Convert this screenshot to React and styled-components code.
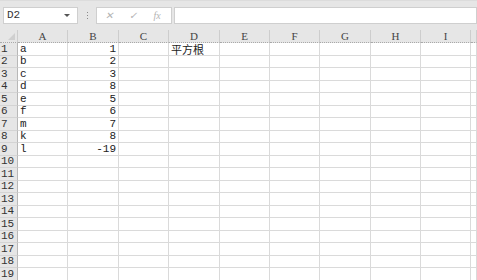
import React from "react";
import styled, { createGlobalStyle } from "styled-components";

const GlobalStyle = createGlobalStyle`
  html, body {
    margin: 0;
    padding: 0;
    background: #ffffff;
    overflow: hidden;
  }
`;

const Page = styled.div`
  width: 477px;
  height: 280px;
  overflow: hidden;
  font-family: "Liberation Mono", "Noto Sans CJK SC", monospace;
  font-size: 11px;
  color: #222;
`;

const Toolbar = styled.div`
  display: flex;
  align-items: center;
  height: 30px;
  box-sizing: border-box;
  padding: 6px 0 7px 3px;
  background: #e6e6e6;
  border-top: 1px solid #dcdcdc;
`;

const Box = styled.div`
  display: flex;
  align-items: center;
  height: 17px;
  box-sizing: border-box;
  background: #fff;
  border: 1px solid #cfcfcf;
  width: ${(p) => p.$w || "auto"};
  flex: ${(p) => (p.$grow ? 1 : "none")};
  margin-left: ${(p) => p.$ml || "0"};
`;

const NameText = styled.span`
  padding-left: 3px;
  flex: 1;
  font-size: 11px;
  color: #333;
`;

const Caret = styled.span`
  width: 0;
  height: 0;
  margin-right: 7px;
  border-left: 3px solid transparent;
  border-right: 3px solid transparent;
  border-top: 3px solid #555;
`;

const Dots = styled.div`
  width: 18px;
  display: flex;
  flex-direction: column;
  align-items: center;
  gap: 2px;
  span {
    width: 1px;
    height: 1px;
    background: #8a8a8a;
  }
`;

const Icon = styled.span`
  width: 24px;
  display: flex;
  justify-content: center;
  align-items: center;
  color: #b3b3b3;
  font-size: 10px;
  font-style: italic;
  font-family: "Liberation Serif", serif;
`;

const Grid = styled.div`
  display: grid;
  grid-template-columns: 18px 50px 51px 50px 51px 50px 50px 51px 50px 50px 6px;
  grid-template-rows: 13px;
  grid-auto-rows: 12.5px;
`;

const Head = styled.div`
  background: #e6e6e6;
  border-right: 1px solid #cdcdcd;
  border-bottom: 1px dotted #a9a9a9;
  display: flex;
  align-items: center;
  justify-content: center;
  color: #444;
  font-size: 11px;
  box-sizing: border-box;
  font-family: "Liberation Serif", serif;
`;

const Corner = styled(Head)`
  position: relative;
  &::after {
    content: "";
    position: absolute;
    right: 2px;
    bottom: 2px;
    border-left: 7px solid transparent;
    border-bottom: 7px solid #cfcfcf;
  }
`;

const RowNum = styled.div`
  background: #e6e6e6;
  border-right: 1px solid #b8b8b8;
  border-bottom: 1px solid #d4d4d4;
  box-sizing: border-box;
  display: flex;
  align-items: center;
  padding-left: 1px;
  color: #333;
  font-size: 11px;
`;

const Cell = styled.div`
  border-right: 1px solid #dadada;
  border-bottom: 1px solid #dadada;
  box-sizing: border-box;
  display: flex;
  align-items: center;
  justify-content: ${(p) => (p.$num ? "flex-end" : "flex-start")};
  padding: 0 2px 0 2px;
  white-space: nowrap;
  overflow: visible;
  font-size: 11px;
  color: #222;
  font-family: ${(p) =>
    p.$cjk ? '"Noto Sans CJK SC", sans-serif' : '"Liberation Mono", monospace'};
`;

const cols = ["A", "B", "C", "D", "E", "F", "G", "H", "I"];

const data = [
  ["a", "1"],
  ["b", "2"],
  ["c", "3"],
  ["d", "8"],
  ["e", "5"],
  ["f", "6"],
  ["m", "7"],
  ["k", "8"],
  ["l", "-19"],
];

export default function App() {
  const rows = [];
  for (let r = 1; r <= 19; r++) {
    const d = data[r - 1];
    rows.push(
      <React.Fragment key={r}>
        <RowNum>{r}</RowNum>
        <Cell>{d ? d[0] : ""}</Cell>
        <Cell $num>{d ? d[1] : ""}</Cell>
        <Cell />
        <Cell $cjk>{r === 1 ? "平方根" : ""}</Cell>
        <Cell />
        <Cell />
        <Cell />
        <Cell />
        <Cell />
        <Cell />
      </React.Fragment>
    );
  }

  return (
    <Page>
      <GlobalStyle />
      <Toolbar>
        <Box $w="75px">
          <NameText>D2</NameText>
          <Caret />
        </Box>
        <Dots>
          <span />
          <span />
          <span />
        </Dots>
        <Box $w="76px">
          <Icon>✕</Icon>
          <Icon>✓</Icon>
          <Icon>fx</Icon>
        </Box>
        <Box $grow $ml="2px" />
      </Toolbar>
      <Grid>
        <Corner />
        {cols.map((c) => (
          <Head key={c}>{c}</Head>
        ))}
        <Head />
        {rows}
      </Grid>
    </Page>
  );
}
